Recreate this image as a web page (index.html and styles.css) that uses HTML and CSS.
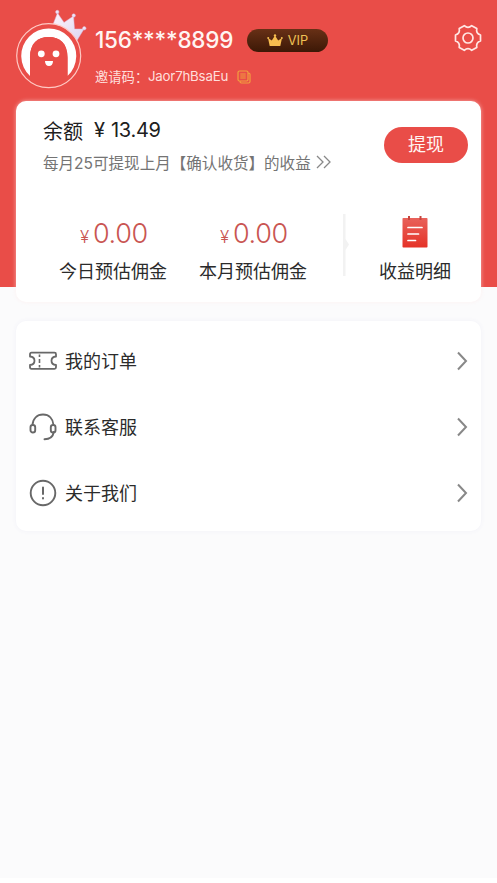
FILE: index.html
```html
<!DOCTYPE html>
<html lang="zh-CN">
<head>
<meta charset="utf-8">
<meta name="viewport" content="width=device-width, initial-scale=1">
<title>我的</title>
<link rel="stylesheet" href="styles.css">
</head>
<body>
<main class="page">
  <header class="profile">
    <svg class="avatar" width="76" height="82" viewBox="14 8 76 82" role="img" aria-label="头像">
      <defs><linearGradient id="silver" x1="0" y1="0" x2="1" y2="1"><stop offset="0" stop-color="#fff4fb"/><stop offset="1" stop-color="#dcd5f0"/></linearGradient></defs>
      <g fill="url(#silver)" stroke="#d8b9dc" stroke-width=".5">
        <path d="M52 27 57.500 13 64 22.500 73.500 16 74.500 29 84 29 76 42Z"/>
        <circle cx="57.300" cy="12" r="1.700"/><circle cx="73.700" cy="15.500" r="1.700"/><circle cx="84.300" cy="28.300" r="1.700"/>
      </g>
      <circle cx="48.700" cy="55.700" r="32" fill="#e94d48" stroke="#ffc9c4" stroke-width="1.200"/>
      <path d="M30 76A27.500 27.500 0 1 1 67.500 76V57.500C67.500 43.500 60 37 48.700 37S30 43.500 30 57.500Z" fill="#fff"/>
      <path d="M30 77V57.500C30 43.500 37.500 37 48.700 37S67.500 43.500 67.500 57.500V77Z" fill="#e94d48"/>
      <circle cx="41.300" cy="53.800" r="3.400" fill="#fff"/><circle cx="56" cy="53.800" r="3.400" fill="#fff"/>
      <path d="M45 61h8c0 3-1.500 5-4 5s-4-2-4-5Z" fill="#fff"/>
    </svg>
    <div class="identity">
      <div class="account">
        <span class="phone">156****8899</span>
        <span class="vip">
          <svg width="16" height="13" viewBox="0 0 16 13"><path d="m1 4 3.800 2.500L8 1.500l3.200 5L15 4l-1.700 8H2.700Z" fill="#f7bd4f"/><circle cx="8" cy="1.500" r="1.200" fill="#f7bd4f"/><circle cx="1.200" cy="4" r="1" fill="#f7bd4f"/><circle cx="14.800" cy="4" r="1" fill="#f7bd4f"/></svg>
          VIP
        </span>
      </div>
      <div class="invite">
        <span>邀请码：</span><span class="code">Jaor7hBsaEu</span>
        <svg class="copy" width="14" height="14" viewBox="0 0 14 14" fill="none" stroke="#f2a03f" stroke-width="1.200"><path d="M2.500 1h7a1.500 1.500 0 0 1 1.500 1.500v7A1.500 1.500 0 0 1 9.500 11h-7A1.500 1.500 0 0 1 1 9.500v-7A1.500 1.500 0 0 1 2.500 1ZM3.300 4h5.400M3.300 6h5.400M3.300 8h5.400M11 3h.5A1.500 1.500 0 0 1 13 4.500v7a1.500 1.500 0 0 1-1.500 1.500h-7A1.500 1.500 0 0 1 3 11.500V11"/></svg>
      </div>
    </div>
    <svg class="gear" width="28" height="28" viewBox="-14 -14 28 28" fill="none" stroke="#ffe7e4" stroke-width="1.700" stroke-linejoin="round"><path d="M-3.700-12.300Q0-8.900 3.700-12.300L8.800-9.400Q7.700-4.500 12.500-3V3Q7.700 4.500 8.800 9.400L3.700 12.300Q0 8.900-3.700 12.300L-8.800 9.400Q-7.700 4.500-12.500 3V-3Q-7.700-4.500-8.800-9.400Z"/><circle r="5"/></svg>
  </header>

  <section class="card wallet">
    <div class="balance">
      <div class="summary">
        <div class="amount"><span>余额</span><span class="yen">¥</span><span class="num">13.49</span></div>
        <div class="note"><span>每月25可提现上月【确认收货】的收益</span>
          <svg width="16" height="14" viewBox="0 0 16 14" fill="none" stroke="#888" stroke-width="1.300"><path d="m1 1 6 6-6 6M8 1l6 6-6 6"/></svg>
        </div>
      </div>
      <button class="withdraw" type="button">提现</button>
    </div>
    <div class="stats">
      <div class="stat"><div class="value"><small>¥</small>0.00</div><div class="label">今日预估佣金</div></div>
      <div class="stat"><div class="value"><small>¥</small>0.00</div><div class="label">本月预估佣金</div></div>
      <svg class="divider" width="6" height="62" viewBox="0 0 6 62"><path d="M0 0h2.500v25L6 30.500 2.500 36v26H0Z" fill="#f2f2f2"/></svg>
      <div class="stat detail">
        <svg width="26" height="32" viewBox="0 0 26 32"><defs><linearGradient id="sheet" x2="0" y2="1"><stop stop-color="#e8625b"/><stop offset="1" stop-color="#e53227"/></linearGradient></defs><rect x=".5" y="2" width="25" height="29.500" rx=".8" fill="url(#sheet)"/><path d="M7 0v4M18.500 0v4" stroke="#c8463f" stroke-width="2"/><path d="M6 11.500h14M6 18h10.500M6 24.500h7.500" stroke="#fff" stroke-width="1.700" stroke-linecap="round"/></svg>
        <div class="label">收益明细</div>
      </div>
    </div>
  </section>

  <nav class="card menu">
    <a class="item">
      <svg width="28" height="28" viewBox="0 0 28 28" fill="none" stroke="#686868" stroke-width="1.800" stroke-linejoin="round"><path d="M2.500 5.700h23q1.500 0 1.500 1.500v2.300c-6 .5-6 8 0 8.500v2.300q0 1.500-1.500 1.500h-23Q1 21.800 1 20.300V18c6-.5 6-8 0-8.500V7.200q0-1.500 1.500-1.500Z"/><path d="M10.500 7.500v2.500M10.500 12v4M10.500 18v2.500" stroke-width="1.600"/></svg>
      <span>我的订单</span>
      <svg class="chevron" width="12" height="20" viewBox="0 0 12 20"><path d="m2 1.500 8 8.500-8 8.500"/></svg>
    </a>
    <a class="item">
      <svg width="28" height="28" viewBox="0 0 28 28" fill="none" stroke="#686868" stroke-width="1.900" stroke-linecap="round"><path d="M3.500 12C4 5.500 8 1.500 14 1.500s10 4 10.500 10.500M24.800 19c-.8 4.500-4.300 7.300-9.300 7.300"/><rect x="1.500" y="12" width="4.700" height="7.500" rx="2.350"/><rect x="21.800" y="12" width="4.700" height="7.500" rx="2.350"/></svg>
      <span>联系客服</span>
      <svg class="chevron" width="12" height="20" viewBox="0 0 12 20"><path d="m2 1.500 8 8.500-8 8.500"/></svg>
    </a>
    <a class="item">
      <svg width="28" height="28" viewBox="0 0 28 28" fill="none" stroke="#686868" stroke-width="1.900" stroke-linecap="round"><circle cx="14" cy="14" r="12.300"/><path d="M14 8.500v6.500M14 19v.6" stroke-width="2"/></svg>
      <span>关于我们</span>
      <svg class="chevron" width="12" height="20" viewBox="0 0 12 20"><path d="m2 1.500 8 8.500-8 8.500"/></svg>
    </a>
  </nav>
</main>
</body>
</html>
```
FILE: styles.css
```css
* { box-sizing: border-box; }
body { margin: 0; background: #fff; color: #2b2b2b; font-family: Inter, "Noto Sans CJK SC", sans-serif; }
svg { display: block; flex: none; }
.page { height: 878px; padding: 0 16px; background: linear-gradient(#e94d48 287px, #fbfbfc 287px); }
.profile { display: flex; height: 101px; color: #fff; }
.avatar { margin: 8px 0 0 -2px; }
.identity { flex: 1; padding: 28px 0 0 5px; }
.account { display: flex; align-items: center; height: 24px; }
.phone { width: 152px; font-size: 22.5px; font-weight: 500; letter-spacing: -.26px; line-height: 22px; margin-top: -1px; white-space: nowrap; color: #fff5f3; }
.vip { display: flex; align-items: center; justify-content: center; gap: 5px; width: 81px; height: 23px; border-radius: 12px; background: linear-gradient(#683016, #3c1806); color: #f0c255; font-size: 12.8px; }
.invite { display: flex; align-items: center; height: 20px; margin-top: 14px; font-size: 13.3px; color: #ffdfdc; }
.invite > span:first-child { width: 53px; white-space: nowrap; }
.invite .code { width: 89px; letter-spacing: -.22px; }
.copy { margin-top: 1px; }
.gear { margin: 24px -1px 0 0; }
.card { background: #fff; border-radius: 10px; box-shadow: 0 0 5px #f1f1f8; }
.wallet { height: 201px; padding: 15px 13px 0 27px; box-shadow: 0 0 4px rgb(255 235 235 / 60%); }
.balance { display: flex; align-items: flex-start; justify-content: space-between; height: 98px; }
.amount { display: flex; align-items: center; height: 28px; font-size: 20px; color: #202020; }
.yen { width: 17px; margin-left: 11px; }
.num { letter-spacing: -.3px; }
.note { display: flex; align-items: center; gap: 5px; height: 22px; margin-top: 7px; font-size: 15.55px; color: #747474; white-space: nowrap; }
.withdraw { width: 84px; height: 36px; margin-top: 11px; padding: 0; border: 0; border-radius: 18px; background: #e94d48; color: #fff5f3; font: 18px/36px Inter, "Noto Sans CJK SC", sans-serif; }
.stats { display: flex; margin-right: -13px; }
.stat { flex: none; width: 140px; text-align: center; }
.value { height: 40px; padding-left: 2px; font-size: 27px; font-weight: 300; letter-spacing: -.3px; line-height: 40px; color: #c95552; }
.value small { margin-right: 4px; font-size: 17px; }
.label { height: 28px; margin-top: 4px; font-size: 18px; line-height: 28px; white-space: nowrap; }
.divider { margin: 0 0 0 20px; }
.detail { display: flex; flex-direction: column; align-items: center; width: 132px; padding-top: 2px; }
.detail .label { margin-top: 10px; }
.menu { height: 210px; margin-top: 19px; padding: 6px 13px; }
.item { display: flex; align-items: center; height: 66px; font-size: 18px; }
.item svg { margin-top: 2px; }
.item span { flex: 1; padding-left: 8px; }
.chevron { fill: none; stroke: #888; stroke-width: 2; }
```
